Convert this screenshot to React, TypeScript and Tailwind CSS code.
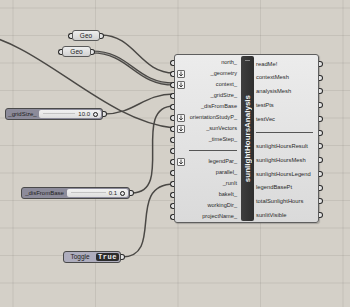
import React from 'react';

type Input = { name: string; flat?: boolean; sep?: boolean };

const inputs: Input[] = [
  { name: 'north_' },
  { name: '_geometry', flat: true },
  { name: 'context_', flat: true },
  { name: '_gridSize_' },
  { name: '_disFromBase' },
  { name: 'orientationStudyP_', flat: true },
  { name: '_sunVectors', flat: true },
  { name: '_timeStep_' },
  { name: '', sep: true },
  { name: 'legendPar_', flat: true },
  { name: 'parallel_' },
  { name: '_runIt' },
  { name: 'bakeIt_' },
  { name: 'workingDir_' },
  { name: 'projectName_' },
];

const outputs: Input[] = [
  { name: 'readMe!' },
  { name: 'contextMesh' },
  { name: 'analysisMesh' },
  { name: 'testPts' },
  { name: 'testVec' },
  { name: '', sep: true },
  { name: 'sunlightHoursResult' },
  { name: 'sunlightHoursMesh' },
  { name: 'sunlightHoursLegend' },
  { name: 'legendBasePt' },
  { name: 'totalSunlightHours' },
  { name: 'sunlitVisible' },
];

const font = { fontFamily: '"Liberation Sans", Arial, sans-serif' };

const InGrip = () => (
  <span className="absolute left-[-5px] top-1/2 -translate-y-1/2 w-[4px] h-[6px] rounded-l-full border border-r-0 border-[#2a2a2a] bg-[#e4e4e4]" />
);

const OutGrip = () => (
  <span className="absolute right-[-5px] top-1/2 -translate-y-1/2 w-[4px] h-[6px] rounded-r-full border border-l-0 border-[#2a2a2a] bg-[#e4e4e4]" />
);

const FlatIcon = () => (
  <span className="absolute left-[2px] top-1/2 -translate-y-1/2 w-[8px] h-[8px] rounded-[1px] border border-[#6a6a6a] bg-[#f5f5f5] flex items-center justify-center">
    <svg width="6" height="6" viewBox="0 0 6 6">
      <path d="M3 0.5 V5 M1.2 3.2 L3 5 L4.8 3.2" stroke="#333" strokeWidth="0.9" fill="none" />
    </svg>
  </span>
);

const Geo = ({ className }: { className: string }) => (
  <div className={`absolute h-[11px] rounded-[3px] border border-[#5a5a5a] bg-gradient-to-b from-[#eeeeee] to-[#d2d2d2] flex items-center justify-center text-[6.5px] text-[#222] ${className}`}>
    <InGrip />
    Geo
    <OutGrip />
  </div>
);

const Slider = ({ className, label, labelW, value }: { className: string; label: string; labelW: string; value: string }) => (
  <div className={`absolute h-[12px] rounded-[3px] border border-[#4a4a4a] bg-[#8c8b9a] flex ${className}`}>
    <div className={`${labelW} flex items-center justify-center text-[6px] text-[#1c1c1c]`}>{label}</div>
    <div className="flex-1 my-[1px] mr-[1px] rounded-[2px] bg-gradient-to-b from-[#f2f2f2] to-[#dedede] flex items-center pl-[4px] pr-[3px] gap-[3px]">
      <div className="flex-1 h-[2px] border-t border-[#c4c4c4]" />
      <span className="text-[6px] text-[#222]">{value}</span>
      <span className="w-[5px] h-[5px] rounded-full border-[1.5px] border-[#1c1c1c]" />
    </div>
    <OutGrip />
  </div>
);

const wires = [
  'M -30 32 C 40 40, 100 120, 174 128',
  'M 101 35 C 135 35, 140 73, 174 73',
  'M 104 114 C 135 114, 143 94, 174 94',
  'M 132 193 C 175 193, 130 106, 174 106',
  'M 122 257 C 165 257, 125 184, 174 184',
];

export default function App() {
  const hLines = [8, 35.5, 63, 90.5, 118, 145.5, 173, 200.5, 228, 255.5, 283];
  const vLines = [13, 95.5, 178, 260.5, 343];
  return (
    <div className="relative w-[350px] h-[307px] overflow-hidden bg-[#d4d0c8]" style={font}>
      <svg className="absolute inset-0" width="350" height="307">
        {hLines.map((y) => (
          <line key={'h' + y} x1="0" x2="350" y1={y} y2={y} stroke="rgba(0,0,0,0.07)" strokeWidth="1" />
        ))}
        {vLines.map((x) => (
          <line key={'v' + x} x1={x} x2={x} y1="0" y2="307" stroke="rgba(0,0,0,0.07)" strokeWidth="1" />
        ))}
        {wires.map((d) => (
          <path key={d} d={d} stroke="#4a4845" strokeWidth="1.5" fill="none" />
        ))}
        <path d="M 92 52 C 130 52, 135 84, 174 84" stroke="#4a4845" strokeWidth="3.2" fill="none" />
        <path d="M 92 52 C 130 52, 135 84, 174 84" stroke="#9c9a96" strokeWidth="1" fill="none" />
      </svg>

      <Geo className="left-[72px] top-[30px] w-[28px]" />
      <Geo className="left-[62px] top-[46px] w-[29px]" />

      <Slider className="left-[5px] top-[108px] w-[98px]" label="_gridSize_" labelW="w-[33px]" value="10.0" />
      <Slider className="left-[21px] top-[187px] w-[109px]" label="_disFromBase" labelW="w-[45px]" value="0.1" />

      {/* toggle */}
      <div className="absolute left-[63px] top-[251px] w-[58px] h-[12px] rounded-[3px] border border-[#4a4a4a] bg-[#aeadbd] flex">
        <div className="w-[32px] flex items-center justify-center text-[6.5px] text-[#222]">Toggle</div>
        <div className="flex-1 my-[1px] mr-[1px] rounded-[2px] bg-[#2c2c2c] flex items-center justify-center text-[7px] font-bold text-[#f2f2f2] tracking-[0.5px]" style={{ fontFamily: '"Liberation Mono", monospace' }}>
          True
        </div>
        <OutGrip />
      </div>

      {/* main component */}
      <div className="absolute left-[174px] top-[54px] w-[145px] h-[169px] rounded-[3px] border border-[#5e5e5e] bg-gradient-to-b from-[#ececec] to-[#dadada] shadow-[1px_1px_1px_rgba(0,0,0,0.2)] flex">
        <div className="w-[66px] pt-[2px] flex flex-col">
          {inputs.map((it, i) => (
            <div key={i} className="relative h-[11px] flex items-center justify-end pr-[4px] text-[5.6px] text-[#2a2a2a]">
              <InGrip />
              {it.flat && <FlatIcon />}
              {it.sep ? <div className="w-[48px] border-t border-[#555]" /> : it.name}
            </div>
          ))}
        </div>
        <div className="w-[13px] my-[1px] rounded-[2px] bg-gradient-to-r from-[#3e3e3e] to-[#2e2e2e] relative flex items-center justify-center">
          <span className="absolute top-[4px] left-[4px] w-[5px] border-t border-[#8a8a8a]" />
          <span className="[writing-mode:vertical-rl] rotate-180 text-[8px] font-bold text-[#f4f4f4] leading-none">sunlightHoursAnalysis</span>
        </div>
        <div className="flex-1 pt-[2px] flex flex-col">
          {outputs.map((it, i) => (
            <div key={i} className="relative h-[13.75px] flex items-center pl-[2px] text-[5.8px] text-[#2a2a2a]">
              {it.sep ? <div className="w-[57px] border-t border-[#555]" /> : it.name}
              <OutGrip />
            </div>
          ))}
        </div>
      </div>
    </div>
  );
}
